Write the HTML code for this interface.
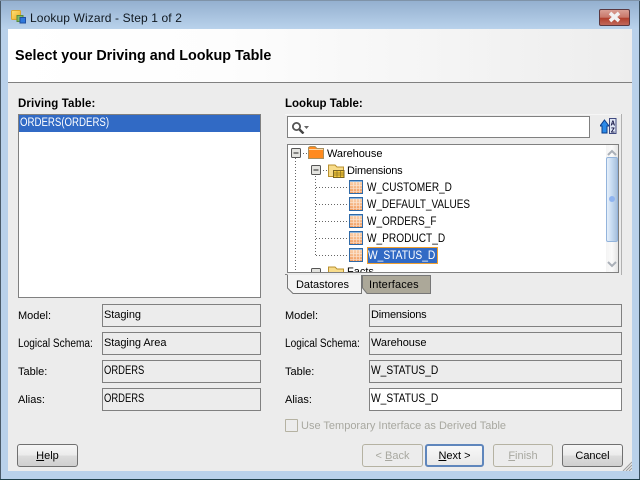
<!DOCTYPE html>
<html>
<head>
<meta charset="utf-8">
<style>
html,body{margin:0;padding:0;background:#000;}
#w{position:relative;width:640px;height:480px;overflow:hidden;background:#b9d1ea;font-family:"Liberation Sans",sans-serif;font-size:11px;color:#000;}
#w div,#w svg{position:absolute;}
.t{white-space:nowrap;line-height:14px;}
.b{font-weight:bold;}
.x{display:inline-block;font-size:11.5px;transform-origin:0 50%;}
.f{box-sizing:border-box;height:23px;border:1px solid #808080;background:#ececec;padding:2px 0 0 1px;line-height:16px;white-space:nowrap;}
.btn{box-sizing:border-box;height:23px;top:444px;border:1px solid #707070;border-radius:3px;background:linear-gradient(#f6f6f6,#ebebeb 48%,#dcdcdc 52%,#cfcfcf);text-align:center;line-height:23px;white-space:nowrap;}
.dis{border-color:#b5b2a2;background:#ececec;color:#a8a8a0;}
u{text-decoration:underline;}
</style>
</head>
<body>
<div id="w">
  <!-- frame -->
  <div style="left:0;top:0;width:640px;height:29px;background:linear-gradient(#93afce,#b9d2eb);"></div>
  <div style="left:0;top:0;width:1px;height:480px;background:#4a5a68;"></div>
  <div style="left:639px;top:0;width:1px;height:480px;background:#3a5060;"></div>
  <div style="left:0;top:479px;width:640px;height:1px;background:#20404a;"></div>
  <div style="left:0;top:0;width:640px;height:1px;background:#7f93a8;"></div>

  <!-- title -->
  <svg style="left:11px;top:10px" width="15" height="14" viewBox="0 0 15 14">
    <defs><linearGradient id="y" x1="0" y1="0" x2="1" y2="1"><stop offset="0" stop-color="#fbe27a"/><stop offset="1" stop-color="#f0a820"/></linearGradient></defs>
    <rect x="0.5" y="0.5" width="9" height="9" rx="1" fill="url(#y)" stroke="#dca52c"/>
    <rect x="6" y="5.5" width="6" height="6" fill="#84bc62" stroke="#5a8c3e"/>
    <rect x="9" y="7.5" width="5.5" height="5.5" fill="#2f78dc" stroke="#1d4fa0"/>
  </svg>
  <div class="t" style="left:30px;top:11px;font-size:12px;color:#101820;letter-spacing:.12px;">Lookup Wizard - Step 1 of 2</div>

  <!-- close button -->
  <div style="left:599px;top:9px;width:31px;height:17px;box-sizing:border-box;border:1px solid #5a3840;border-radius:2px;background:linear-gradient(#d99f94,#c9786a 48%,#b2402e 55%,#c0685a);"></div>
  <svg style="left:607px;top:11px" width="15" height="12" viewBox="0 0 15 12">
    <path d="M3 2 L12 10 M12 2 L3 10" stroke="#f2f2f2" stroke-width="3.6" fill="none"/>
  </svg>

  <!-- content -->
  <div style="left:8px;top:29px;width:624px;height:442px;background:#ececec;"></div>
  <div style="left:8px;top:29px;width:624px;height:53px;background:linear-gradient(90deg,#ffffff,#fdfdfd 35%,#ededed);"></div>
  <div style="left:8px;top:82px;width:624px;height:1px;background:#808080;"></div>
  <div class="t b" style="left:15px;top:49px;font-size:14.35px;">Select your Driving and Lookup Table</div>

  <!-- driving -->
  <div class="t b" style="left:18px;top:97px;font-size:11.5px;letter-spacing:.12px;">Driving Table:</div>
  <div style="left:18px;top:114px;width:243px;height:184px;box-sizing:border-box;border:1px solid #808080;background:#fff;"></div>
  <div class="t" style="left:19px;top:115px;width:241px;height:17px;background:#316ac5;color:#fff;line-height:17px;padding-left:1px;box-sizing:border-box;"><span class="x" style="transform:scaleX(.84)">ORDERS(ORDERS)</span></div>

  <!-- lookup -->
  <div class="t b" style="left:285px;top:97px;font-size:11.5px;">Lookup Table:</div>
  <div style="left:285px;top:114px;width:337px;height:1px;background:#f6f6f6;"></div>
  <div style="left:621px;top:114px;width:1px;height:161px;background:#b0b0b0;"></div>
  <div style="left:287px;top:116px;width:303px;height:22px;box-sizing:border-box;border:1px solid #808080;background:#fff;"></div>
  <svg style="left:292px;top:122px" width="18" height="12" viewBox="0 0 18 12">
    <circle cx="4.5" cy="4.5" r="3.6" fill="none" stroke="#555" stroke-width="1.8"/>
    <path d="M7.5 7.5 L11.5 11.5" stroke="#444" stroke-width="2.4"/>
    <path d="M12 4 H17 L14.5 7 Z" fill="#666"/>
  </svg>
  <svg style="left:600px;top:118px" width="17" height="16" viewBox="0 0 17 16">
    <path d="M4.5 2 L9 8 H7 V15 H2 V8 H0 Z" fill="#2b8ae8" stroke="#0a3d8a"/>
    <rect x="9.5" y="0.5" width="6.5" height="15" fill="#dfe6f5" stroke="#404a80"/>
    <text x="10.8" y="7.5" font-family="Liberation Mono,monospace" font-size="7" font-weight="bold" fill="#101040">A</text>
    <text x="10.8" y="14.5" font-family="Liberation Mono,monospace" font-size="7" font-weight="bold" fill="#101040">Z</text>
  </svg>

  <!-- tree -->
  <div style="left:287px;top:144px;width:332px;height:129px;box-sizing:border-box;border:1px solid #808080;background:#fff;"></div>

  <svg style="left:288px;top:145px" width="130" height="127" viewBox="288 145 130 127">
    <g stroke="#666" stroke-dasharray="1 2" fill="none">
      <path d="M295.5 158 V272"/>
      <path d="M315.5 176 V256"/>
      <path d="M300 153.5 H308"/>
      <path d="M320 170.5 H328"/>
      <path d="M316 187.5 H349"/>
      <path d="M316 204.5 H349"/>
      <path d="M316 221.5 H349"/>
      <path d="M316 238.5 H349"/>
      <path d="M316 255.5 H349"/>
    </g>
    <g fill="#e4e4e0" stroke="#555">
      <rect x="291.5" y="148.5" width="9" height="9" rx="1"/>
      <rect x="311.5" y="165.5" width="9" height="9" rx="1"/>
      <rect x="311.5" y="268.5" width="9" height="9" rx="1"/>
    </g>
    <path d="M293.5 153 H298.5 M313.5 170 H318.5" stroke="#222"/>
    <!-- warehouse folder -->
    <path d="M308.5 147.5 L310 146.5 H315 L317 148.5 H323.5 V158.5 H308.5 Z" fill="#ff8a1e" stroke="#a89060"/>
    <path d="M309 149.5 H323" stroke="#ffd9a8"/>
    <!-- dimensions folder -->
    <path d="M328.5 165 H335 L337 167 H343.5 V176.5 H328.5 Z" fill="#f8dc8a" stroke="#b89030"/>
    <rect x="333.5" y="170.5" width="10.5" height="7" fill="#f5c838" stroke="#7a6420"/>
    <path d="M334 173 H344 M334 175 H344 M337 171 V177 M340.5 171 V177" stroke="#8a7020" stroke-width=".7"/>
    <!-- facts folder -->
    <path d="M328.5 267 H335 L337 269 H343.5 V278 H328.5 Z" fill="#f8dc8a" stroke="#b89030"/>
  </svg>

  <svg width="0" height="0" style="left:0;top:0">
    <defs>
      <linearGradient id="g" x1="0" y1="0" x2="0" y2="1"><stop offset="0" stop-color="#fcd8b6"/><stop offset="1" stop-color="#f0995a"/></linearGradient>
      <g id="tbl">
        <rect x="0.5" y="0.5" width="13" height="13" fill="url(#g)" stroke="#2f6aa8"/>
        <path d="M1 1.5 H13" stroke="#8fb6de"/>
        <path d="M1 5.5 H13 M1 8.5 H13 M1 11.5 H13 M4.5 2 V13 M7.5 2 V13 M10.5 2 V13" stroke="#fff" stroke-opacity=".55" stroke-width=".8"/>
      </g>
    </defs>
  </svg>
  <svg style="left:349px;top:180px" width="15" height="85" viewBox="0 0 15 85">
    <use href="#tbl" x="0" y="0"/>
    <use href="#tbl" x="0" y="17"/>
    <use href="#tbl" x="0" y="34"/>
    <use href="#tbl" x="0" y="51"/>
    <use href="#tbl" x="0" y="68"/>
  </svg>

  <div class="t" style="left:327px;top:147px;letter-spacing:-.05px;">Warehouse</div>
  <div class="t" style="left:347px;top:164px;letter-spacing:-.2px;">Dimensions</div>
  <div class="t" style="left:367px;top:181px;"><span class="x" style="transform:scaleX(.87)">W_CUSTOMER_D</span></div>
  <div class="t" style="left:367px;top:198px;"><span class="x" style="transform:scaleX(.865)">W_DEFAULT_VALUES</span></div>
  <div class="t" style="left:367px;top:215px;"><span class="x" style="transform:scaleX(.87)">W_ORDERS_F</span></div>
  <div class="t" style="left:367px;top:232px;"><span class="x" style="transform:scaleX(.88)">W_PRODUCT_D</span></div>
  <div class="t" style="left:367px;top:247px;width:71px;height:17px;box-sizing:border-box;border:1px solid #f0a030;background:#316ac5;color:#fff;line-height:16px;"><span class="x" style="transform:scaleX(.89)">W_STATUS_D</span></div>
  <div style="left:347px;top:265px;width:50px;height:7px;overflow:hidden;"><div class="t" style="left:0;top:0;">Facts</div></div>

  <!-- scrollbar -->
  <div style="left:606px;top:145px;width:12px;height:127px;background:linear-gradient(90deg,#f4f4f4,#fafafa,#e4e4e4);"></div>
  <svg style="left:606px;top:146px" width="12" height="125" viewBox="0 0 12 125">
    <path d="M2 9 L6 5 L10 9" stroke="#aab0b8" stroke-width="2" fill="none"/>
    <path d="M2 116 L6 120 L10 116" stroke="#aab0b8" stroke-width="2" fill="none"/>
  </svg>
  <div style="left:606px;top:157px;width:12px;height:85px;box-sizing:border-box;border:1px solid #93b4dc;border-radius:2px;background:linear-gradient(90deg,#e8f0fa,#c8dcf2 45%,#a8c0dc);"></div>
  <div style="left:609px;top:196px;width:6px;height:6px;border-radius:3px;background:#8fb4f0;"></div>

  <!-- tabs -->
  <svg style="left:285px;top:274px" width="150" height="22" viewBox="0 0 150 22">
    <path d="M0 0.5 H2.5" stroke="#808080"/>
    <path d="M77.5 1.5 V14 L82 19.5 H145.5 V1.5 Z" fill="#aca899" stroke="#777"/>
    <path d="M2.5 1 V14 L8 19.5 H76.5 V1" fill="#f4f4f4" stroke="#777"/>
  </svg>
  <div class="t" style="left:296px;top:278px;letter-spacing:-.02px;">Datastores</div>
  <div class="t" style="left:369px;top:278px;letter-spacing:.15px;">Interfaces</div>

  <!-- left fields -->
  <div class="t" style="left:18px;top:309px;">Model:</div>
  <div class="t" style="left:18px;top:337px;"><span class="x" style="transform:scaleX(.88)">Logical Schema:</span></div>
  <div class="t" style="left:18px;top:365px;">Table:</div>
  <div class="t" style="left:18px;top:393px;">Alias:</div>
  <div class="f" style="left:102px;top:304px;width:159px;letter-spacing:-.05px;">Staging</div>
  <div class="f" style="left:102px;top:332px;width:159px;letter-spacing:-.05px;">Staging Area</div>
  <div class="f" style="left:102px;top:360px;width:159px;"><span class="x" style="transform:scaleX(.82)">ORDERS</span></div>
  <div class="f" style="left:102px;top:388px;width:159px;"><span class="x" style="transform:scaleX(.82)">ORDERS</span></div>

  <!-- right fields -->
  <div class="t" style="left:285px;top:309px;">Model:</div>
  <div class="t" style="left:285px;top:337px;"><span class="x" style="transform:scaleX(.88)">Logical Schema:</span></div>
  <div class="t" style="left:285px;top:365px;">Table:</div>
  <div class="t" style="left:285px;top:393px;">Alias:</div>
  <div class="f" style="left:369px;top:304px;width:253px;letter-spacing:-.2px;">Dimensions</div>
  <div class="f" style="left:369px;top:332px;width:253px;letter-spacing:-.05px;">Warehouse</div>
  <div class="f" style="left:369px;top:360px;width:253px;"><span class="x" style="transform:scaleX(.89)">W_STATUS_D</span></div>
  <div class="f" style="left:369px;top:388px;width:253px;background:#fff;"><span class="x" style="transform:scaleX(.89)">W_STATUS_D</span></div>

  <!-- checkbox -->
  <div style="left:285px;top:419px;width:13px;height:13px;box-sizing:border-box;border:1px solid #b5b2a2;border-radius:1px;background:#ececec;"></div>
  <div class="t" style="left:301px;top:419px;color:#a8a8a0;">Use Temporary Interface as Derived Table</div>

  <!-- buttons -->
  <div class="btn" style="left:17px;width:61px;"><u>H</u>elp</div>
  <div class="btn dis" style="left:362px;width:61px;">&lt; <u>B</u>ack</div>
  <div class="btn" style="left:425px;width:59px;border:2px solid #5f86bc;line-height:21px;background:linear-gradient(#f8f8f8,#e8e8e8);"><u>N</u>ext &gt;</div>
  <div class="btn dis" style="left:493px;width:60px;"><u>F</u>inish</div>
  <div class="btn" style="left:562px;width:61px;">Cancel</div>

  <!-- grip -->
  <svg style="left:622px;top:461px" width="10" height="10" viewBox="0 0 10 10">
    <path d="M10 1 L1 10 M10 4 L4 10 M10 7 L7 10" stroke="#9a9a9a" stroke-width="1"/>
  </svg>
</div>
</body>
</html>
